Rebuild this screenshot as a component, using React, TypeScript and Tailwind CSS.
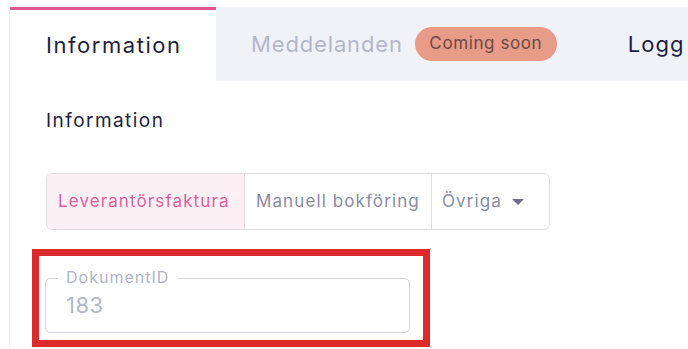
import React from 'react';

const font = { fontFamily: 'Inter, "Noto Sans", sans-serif' };

export default function App() {
  return (
    <div className="w-[688px] h-[349px] bg-white overflow-hidden pt-[7px]" style={font}>
      <div className="ml-[9px] border-l border-[#eef0f5] h-full">
        {/* tabs */}
        <div className="flex h-[74px]">
          <div className="w-[206px] shrink-0 border-t-[3px] border-[#e0558d] bg-white flex items-center pl-[36px]">
            <span className="text-[22px] text-[#1d1f3b] tracking-[1.55px]">Information</span>
          </div>
          <div className="flex-1 bg-[#f1f2f7] flex items-center">
            <span className="ml-[35px] text-[22px] text-[#b3b7cc] tracking-[0.85px]">Meddelanden</span>
            <span className="ml-[12px] h-[34px] w-[142px] justify-center rounded-full bg-[#e89b86] text-[#6b4a4a] text-[17px] tracking-[0.6px] flex items-center">
              Coming soon
            </span>
            <span className="ml-[71px] text-[22px] text-[#1d1f3b] tracking-[1px]">Logg</span>
          </div>
        </div>

        <div className="pl-[36px]">
          <div className="pt-[28px] text-[19px] text-[#1d1f3b] leading-[24px] tracking-[1.45px]">Information</div>

          {/* segmented control */}
          <div className="mt-[40px] inline-flex h-[57px] border border-[#dcdde3] rounded-[6px] overflow-hidden text-[17px] tracking-[1.1px]">
            <div className="flex items-center w-[198px] pl-[11px] bg-[#fdf0f5] text-[#e0619b] border-r border-[#dcdde3]">
              Leverantörsfaktura
            </div>
            <div className="flex items-center w-[187px] pl-[11px] text-[#8a8ca0] border-r border-[#dcdde3]">
              Manuell bokföring
            </div>
            <div className="flex items-center w-[117px] pl-[10px] text-[#8a8ca0] gap-[9px]">
              Övriga
              <svg width="14" height="8" viewBox="0 0 14 8">
                <path d="M1 1h12L7 7z" fill="#6e7085" />
              </svg>
            </div>
          </div>

          {/* highlighted field */}
          <div className="mt-[19px] -ml-[14px] w-[398px] h-[98px] border-[7px] border-[#dd2a2c] pt-[22px] pl-[6px]">
            <div className="relative w-[365px] h-[55px] border border-[#d3d5dd] rounded-[5px]">
              <span className="absolute -top-[12px] left-[12px] bg-white px-[8px] text-[16px] leading-[20px] tracking-[1px] text-[#b0b4c8]">
                DokumentID
              </span>
              <div className="pl-[20px] pt-[13px] text-[22px] leading-[26px] tracking-[0.5px] text-[#b3b7cc]">183</div>
            </div>
          </div>
        </div>
      </div>
    </div>
  );
}
